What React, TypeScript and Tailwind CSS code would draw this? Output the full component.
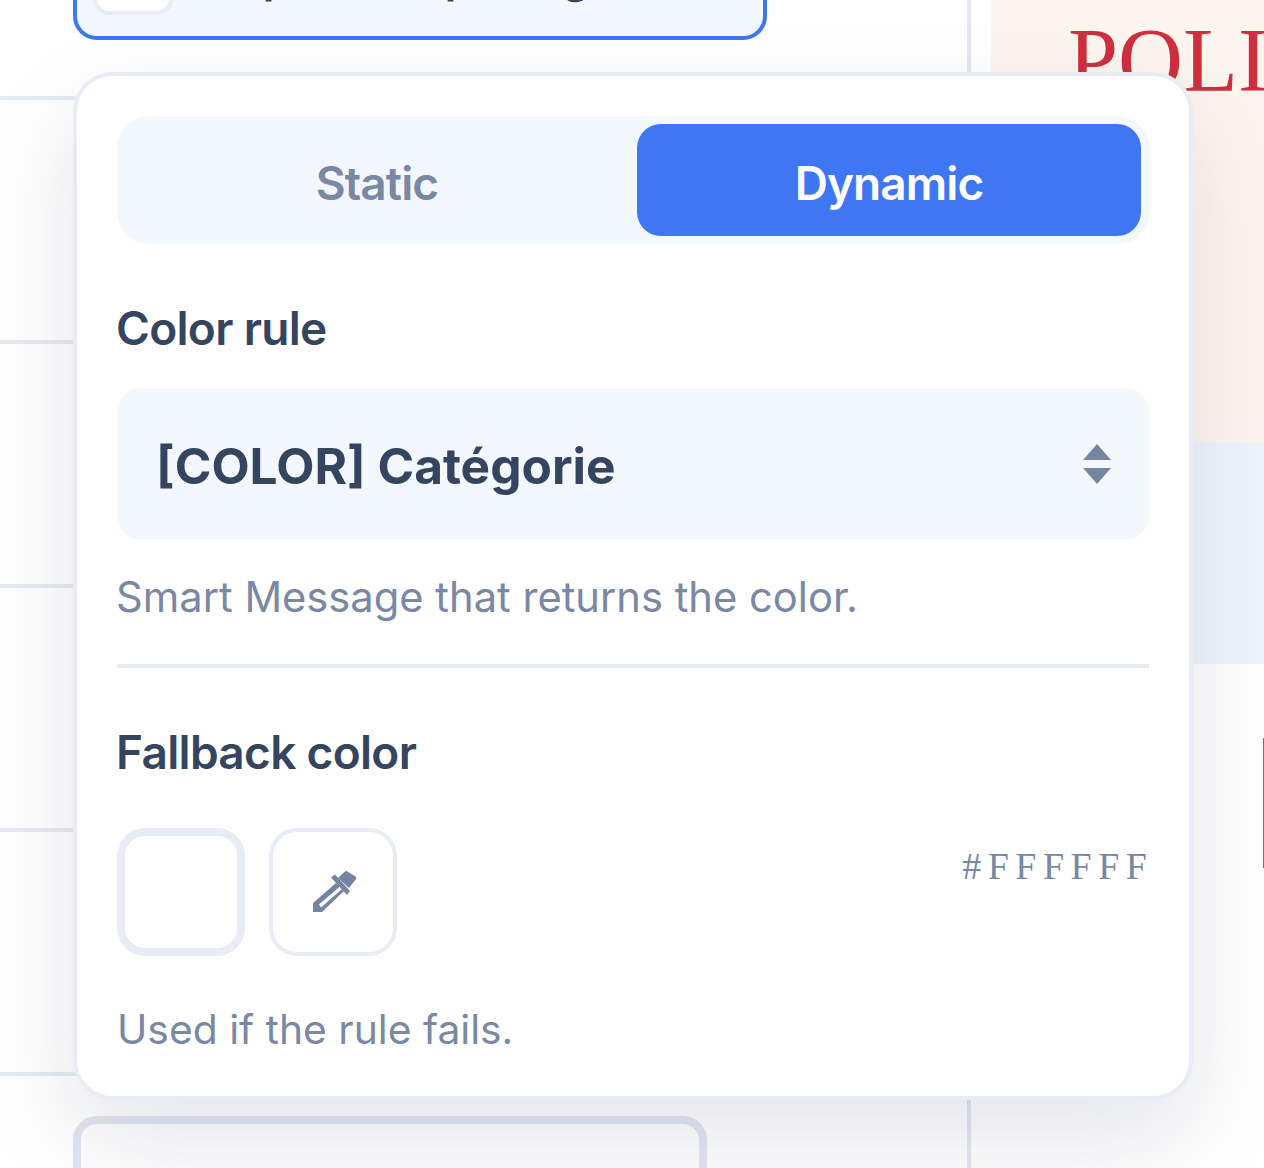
const rows = [0, 1, 2, 3, 4, 5]

function Row({ index }: { index: number }) {
  const selected = index === 0
  return (
    <div className="h-[244px] shrink-0 border-b-4 border-[#e6eaf2] pl-[73px] pt-[40px]">
      {selected ? (
        <div className="flex h-[144px] w-[694px] items-end gap-[24px] rounded-[24px] border-4 border-[#3e76f4] bg-[#f3f7fe] pl-[16px]">
          <div className="mb-[21px] h-[80px] w-[80px] shrink-0 rounded-[16px] border-4 border-[#e8edf5] bg-white" />
          <span className="mb-[35px] whitespace-nowrap text-[44px] font-semibold leading-[48px] text-[#35445f]">Map color spacing</span>
        </div>
      ) : (
        <div className="h-[144px] w-[634px] rounded-[24px] border-8 border-[#e2e6f0]" />
      )}
    </div>
  )
}

export default function App() {
  return (
    <div className="relative h-[1168px] w-[1264px] overflow-hidden bg-white font-['Inter',sans-serif]">
      {/* page behind the popover */}
      <div className="flex h-full">
        <div className="-mt-[144px] flex w-[967px] shrink-0 flex-col">
          {rows.map((r) => (
            <Row key={r} index={r} />
          ))}
        </div>
        <div className="w-[4px] shrink-0 bg-[#e3e7f0]" />
        <div className="w-[20px] shrink-0" />
        <div className="flex flex-1 flex-col overflow-hidden">
          <div className="h-[442px] shrink-0 overflow-hidden bg-[#fdf6ee] pl-[77px]">
            <div className="whitespace-nowrap pt-[9px] font-['Liberation_Serif',serif] text-[90px] leading-[104px] text-[#cf2f3f]">
              POLITIQUE
            </div>
          </div>
          <div className="h-[222px] shrink-0 bg-[#f0f4fb]" />
          <div className="pl-[272px] pt-[74px]">
            <div className="h-[130px] border-l-4 border-[#3e76f4]" />
          </div>
        </div>
      </div>

      {/* color popover */}
      <div className="absolute left-[73px] top-[72px] w-[1120px] rounded-[40px] border-4 border-[#e8edf5] bg-white px-[40px] pb-[42px] pt-[40px] shadow-[0_40px_100px_rgba(30,41,70,0.12)]">
        <div className="grid h-[128px] grid-cols-2 gap-[8px] rounded-[32px] bg-[#f3f7fe] p-[8px]">
          <div className="flex items-center justify-center pt-[6px] text-[46px] font-semibold tracking-[-0.02em] text-[#7a88a3]">
            Static
          </div>
          <div className="flex items-center justify-center rounded-[24px] bg-[#3e76f4] pt-[6px] text-[46px] font-semibold tracking-[-0.02em] text-white">
            Dynamic
          </div>
        </div>

        <div className="mt-[56px] -ml-px text-[46px] font-semibold leading-[56px] tracking-[-0.015em] text-[#35445f]">Color rule</div>
        <div className="mt-[32px] flex h-[152px] items-center justify-between rounded-[24px] bg-[#f3f7fe] pl-[39px] pr-[38px]">
          <span className="pt-[4px] text-[49.6px] font-bold text-[#35445f]">[COLOR] Catégorie</span>
          <svg width="28" height="40" viewBox="0 0 28 40" className="fill-[#76859f]">
            <path d="M14 0 28 16H0Z" />
            <path d="M0 24H28L14 40Z" />
          </svg>
        </div>
        <div className="mt-[32px] -ml-px text-[41.7px] leading-[50px] text-[#7a88a3]">Smart Message that returns the color.</div>

        <div className="mt-[42px] h-[4px] bg-[#e8edf5]" />

        <div className="mt-[56px] -ml-px text-[46px] font-semibold leading-[56px] tracking-[-0.015em] text-[#35445f]">Fallback color</div>
        <div className="mt-[48px] flex items-start justify-between">
          <div className="flex gap-[24px]">
            <div className="h-[128px] w-[128px] rounded-[28px] border-8 border-[#e8edf5] bg-white" />
            <div className="flex h-[128px] w-[128px] items-center justify-center rounded-[28px] border-4 border-[#e8edf5] bg-white">
              <svg width="44" height="44" viewBox="0 0 44 44" className="ml-[3px] fill-[#76859f]" fillRule="evenodd">
                <path d="M33.5 1 42.5 6.5a2 2 0 0 1 .5 2.5L36 18 25 8 32 1.5a1.5 1.5 0 0 1 1.5-.5Z" />
                <path d="M18 7.5 22 4.5 37 21 34 25Z" />
                <path d="M23 13 31 21 9 42H0V33ZM27 16.5 6 34.5 8 37.5 29 19Z" />
              </svg>
            </div>
          </div>
          <span className="-mr-[4.5px] font-['Liberation_Serif',serif] text-[38px] leading-[76px] tracking-[6.5px] text-[#7a88a3]">#FFFFFF</span>
        </div>
        <div className="mt-[48px] text-[40.8px] leading-[50px] text-[#7a88a3]">Used if the rule fails.</div>
      </div>
    </div>
  )
}
